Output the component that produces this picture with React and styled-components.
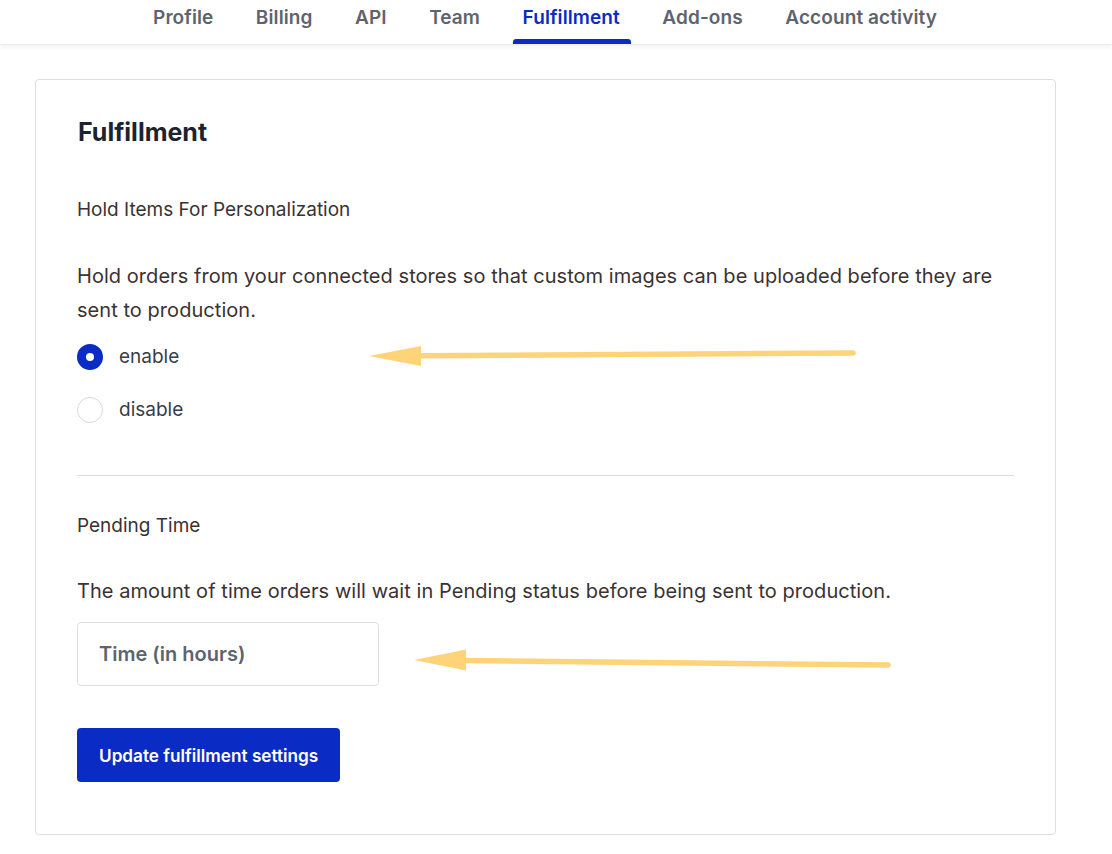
import React from 'react'
import styled, { createGlobalStyle } from 'styled-components'

const GlobalStyle = createGlobalStyle`
  html, body {
    margin: 0;
    padding: 0;
    background: #ffffff;
  }
  body {
    font-family: 'Inter', 'Noto Sans', sans-serif;
    -webkit-font-smoothing: antialiased;
  }
`

const colors = {
  blue: '#0a2bc4',
  tab: '#5e646e',
  ink: '#1c2330',
  body: '#3a3232',
  label: '#383d48',
  line: '#dedede',
  arrow: '#ffd378'
}

const Page = styled.div`
  position: relative;
  width: 1112px;
  min-height: 854px;
`

const NavBar = styled.nav`
  height: 44px;
  display: flex;
  justify-content: center;
  align-items: stretch;
  gap: 42.5px;
  padding-right: 22px;
  box-shadow: 0 2px 4px rgba(0, 0, 0, 0.06);
  border-bottom: 1px solid #eeeeee;
`

const Tab = styled.a`
  position: relative;
  display: flex;
  align-items: flex-start;
  padding-top: 6px;
  font-size: 19px;
  line-height: 24px;
  font-weight: 600;
  letter-spacing: 0.1px;
  color: ${p => (p.$active ? colors.blue : colors.tab)};
  text-decoration: none;

  &::after {
    content: '';
    display: ${p => (p.$active ? 'block' : 'none')};
    position: absolute;
    left: -10px;
    right: -11px;
    bottom: 0;
    height: 5px;
    border-radius: 3px 3px 0 0;
    background: ${colors.blue};
  }
`

const Card = styled.section`
  margin: 34px 56px 18px 35px;
  border: 1px solid ${colors.line};
  border-radius: 4px;
  padding: 36px 41px 52px 41px;
`

const Title = styled.h2`
  margin: 0 0 0 1px;
  font-size: 25px;
  line-height: 32px;
  font-weight: 700;
  color: ${colors.ink};
`

const Section = styled.div`
  padding-top: ${p => p.$top || 0}px;
`

const Label = styled.div`
  font-size: 19px;
  line-height: 24px;
  color: ${colors.body};
`

const Help = styled.p`
  margin: ${p => p.$mt || 0}px 0 0;
  font-size: 20px;
  line-height: 34px;
  letter-spacing: 0.05px;
  color: ${colors.body};
  max-width: 936px;
`

const RadioGroup = styled.div`
  display: flex;
  flex-direction: column;
  gap: 27px;
  margin-top: 17px;
`

const RadioRow = styled.label`
  display: flex;
  align-items: center;
  gap: 16px;
  font-size: 19px;
  line-height: 26px;
  color: ${colors.label};
`

const RadioDot = styled.span`
  width: 26px;
  height: 26px;
  box-sizing: border-box;
  border-radius: 50%;
  border: ${p => (p.$checked ? `9px solid ${colors.blue}` : '1px solid #d8d8d8')};
  background: #fff;
`

const Divider = styled.hr`
  border: none;
  border-top: 1px solid ${colors.line};
  margin: 52px 0 0;
`

const Input = styled.input`
  display: block;
  margin-top: 14px;
  width: 302px;
  height: 64px;
  box-sizing: border-box;
  border: 1px solid ${colors.line};
  border-radius: 4px;
  padding: 0 21px;
  font-family: inherit;
  font-size: 20px;
  font-weight: 600;
  color: ${colors.tab};
  outline: none;

  &::placeholder {
    color: ${colors.tab};
    opacity: 1;
  }
`

const Button = styled.button`
  display: block;
  margin-top: 42px;
  height: 54px;
  padding: 0 22px;
  border: none;
  border-radius: 4px;
  background: ${colors.blue};
  color: #fff;
  font-family: inherit;
  font-size: 17.2px;
  font-weight: 600;
`

const Overlay = styled.svg`
  position: absolute;
  inset: 0;
  pointer-events: none;
`

const Arrow = ({ from, to, base, half }) => (
  <g fill={colors.arrow} stroke={colors.arrow}>
    <line
      x1={from[0]}
      y1={from[1]}
      x2={base}
      y2={to[1] + (from[1] - to[1]) * 0.1}
      strokeWidth="5.5"
      strokeLinecap="round"
    />
    <polygon
      stroke="none"
      points={`${to[0]},${to[1]} ${base},${to[1] - half} ${base},${to[1] + half}`}
    />
  </g>
)

const tabs = ['Profile', 'Billing', 'API', 'Team', 'Fulfillment', 'Add-ons', 'Account activity']

export default function App() {
  return (
    <Page>
      <GlobalStyle />
      <NavBar>
        {tabs.map(t => (
          <Tab key={t} $active={t === 'Fulfillment'}>
            {t}
          </Tab>
        ))}
      </NavBar>

      <Card>
        <Title>Fulfillment</Title>

        <Section $top={50}>
          <Label>Hold Items For Personalization</Label>
          <Help $mt={37}>
            Hold orders from your connected stores so that custom images can be uploaded before they
            are sent to production.
          </Help>
          <RadioGroup>
            <RadioRow>
              <RadioDot $checked />
              enable
            </RadioRow>
            <RadioRow>
              <RadioDot />
              disable
            </RadioRow>
          </RadioGroup>
        </Section>

        <Divider />

        <Section $top={38}>
          <Label>Pending Time</Label>
          <Help $mt={36}>
            The amount of time orders will wait in Pending status before being sent to production.
          </Help>
          <Input placeholder="Time (in hours)" />
          <Button>Update fulfillment settings</Button>
        </Section>
      </Card>

      <Overlay width="1112" height="854">
        <Arrow from={[853, 353]} to={[369, 356]} base={421} half={10} />
        <Arrow from={[888, 665]} to={[414, 660]} base={466} half={10.5} />
      </Overlay>
    </Page>
  )
}
